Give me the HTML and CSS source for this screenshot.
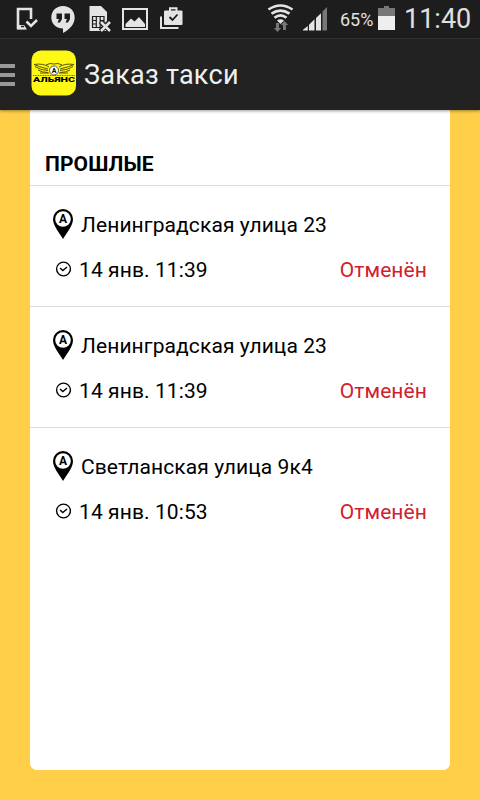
FILE: index.html
```
<!DOCTYPE html>
<html lang="ru">
<head>
    <meta charset="UTF-8">
    <meta name="viewport" content="width=device-width, initial-scale=1.0">
    <title>Заказ такси</title>
    <link rel="stylesheet" href="styles.css">
</head>
<body>

    <div class="status-bar">
        <div class="notifications">
            <svg width="24" height="38" viewBox="15 0 24 38">
                <path d="M31 19V9H18V28H25" fill="none" stroke="#e4e4e4" stroke-width="2.600"/>
                <path d="M17 25H24L27 29.500H17Z" fill="#e4e4e4"/>
                <path d="M21 26.500H24" stroke="#1d1d1d" stroke-width="1.500"/>
                <path d="M26.500 21.500L31 26L37 20" fill="none" stroke="#e4e4e4" stroke-width="2.500"/>
            </svg>
            <svg width="26" height="38" viewBox="50 0 26 38">
                <path d="M63 6C56 6 51.300 11 51.300 17.500C51.300 24 56.500 28.500 63 28.500V33C69 30 74.700 24.500 74.700 17.500C74.700 11 70 6 63 6Z" fill="#e4e4e4"/>
                <path d="M56.500 13.500H62V19L60 22.500H57.500L59 19H56.500ZM64.500 13.500H70V19L68 22.500H65.500L67 19H64.500Z" fill="#1d1d1d"/>
            </svg>
            <svg width="24" height="38" viewBox="88 0 24 38">
                <path d="M89.500 6H101L107 12V31H89.500Z" fill="#e4e4e4"/>
                <path d="M92.500 16.500H104V27.500H92.500ZM96.300 16.500V27.500M100.200 16.500V27.500M92.500 20.500H96M92.500 24H96M100 20.500H104M100 24H104" fill="none" stroke="#1d1d1d" stroke-width="1.200"/>
                <path d="M100.500 21.500L110 31M110 21.500L100.500 31" stroke="#1d1d1d" stroke-width="5"/>
                <path d="M101 22L110 31M110 22L101 31" stroke="#e4e4e4" stroke-width="2.500"/>
            </svg>
            <svg width="28" height="38" viewBox="121 0 28 38">
                <rect x="123" y="9" width="24" height="20" fill="none" stroke="#e4e4e4" stroke-width="2"/>
                <path d="M125.500 27V24L131 18.500L134.500 21.500L139 17L145 24V27Z" fill="#e4e4e4"/>
            </svg>
            <svg width="26" height="38" viewBox="158 0 26 38">
                <path d="M161 16.500V28H178.500" fill="none" stroke="#e4e4e4" stroke-width="2"/>
                <path d="M170 11V8.200H176.500V11" fill="none" stroke="#e4e4e4" stroke-width="2"/>
                <rect x="164" y="10.500" width="18.500" height="14.500" rx="1" fill="#e4e4e4"/>
                <path d="M169.500 17L172.500 20L177.500 14.500" fill="none" stroke="#1d1d1d" stroke-width="1.800"/>
            </svg>
        </div>
        <div class="indicators">
            <svg width="28" height="38" viewBox="266 0 28 38">
                <g fill="none" stroke="#e4e4e4" stroke-width="2.700">
                    <path d="M268.500 9.500Q280.500 1.500 292.500 9.500"/>
                    <path d="M271.500 13.700Q280.500 7.500 289.500 13.700"/>
                    <path d="M274.500 17.800Q280.500 13 286.500 17.800"/>
                </g>
                <path d="M277 20.500Q280.500 18 284 20.500L280.500 24Z" fill="#e4e4e4"/>
                <path d="M276 23H279V28H281.200L277.500 32L273.800 28H276ZM283 30H286V25H288.200L284.500 21L280.800 25H283Z" fill="#777"/>
            </svg>
            <svg class="signal" width="26" height="38" viewBox="302 0 26 38">
                <path d="M303 30.500V29.800L307.800 25.900V30.500ZM309 30.500V24.700L314.500 19.300V30.500ZM316 30.500V18L321 13.200V30.500Z" fill="#e4e4e4"/>
                <path d="M322.500 11.500L327 7V30.500H322.500Z" fill="#777"/>
            </svg>
            <span class="percent">65%</span>
            <svg width="18" height="38" viewBox="378 0 18 38">
                <path d="M378 8H384V6H389V8H395V16H378Z" fill="#777"/>
                <rect x="378" y="16" width="17" height="14" fill="#eee"/>
            </svg>
            <span class="time">11:40</span>
        </div>
    </div>

    <div class="action-bar">
        <div class="menu">
            <span></span>
            <span></span>
            <span></span>
        </div>
        <svg class="logo" width="46" height="46" viewBox="0 0 46 46">
            <rect x="0.500" y="0.500" width="44.500" height="45" rx="9.500" fill="#fff714"/>
            <g fill="none" stroke="#5c5900" stroke-width="1">
                <path d="M18 17Q12 13 3 14.500Q7 16.500 17 19M4 16.500Q9 20 17 20.500M7 20Q11 22.500 17 22.500M9 23H18"/>
                <path d="M28 17Q34 13 43 14.500Q39 16.500 29 19M42 16.500Q37 20 29 20.500M39 20Q35 22.500 29 22.500M28 23H37"/>
                <path d="M15 15Q19 12.500 23 14Q27 12.500 31 15"/>
                <path d="M2 25.500H44" stroke-dasharray="1 0.700" stroke-width="0.900"/>
            </g>
            <circle cx="23" cy="20.500" r="4.500" fill="#fff" stroke="#333" stroke-width="0.800"/>
            <text class="logo-letter" x="23" y="23.300">А</text>
            <text class="logo-name" x="2" y="32.300" textLength="42" lengthAdjust="spacingAndGlyphs">АЛЬЯНС</text>
        </svg>
        <h1>Заказ такси</h1>
    </div>

    <div class="card">
        <h2>ПРОШЛЫЕ</h2>

        <div class="order">
            <div class="address">
                <svg class="pin" width="20" height="30" viewBox="0 0 20 30">
                    <path d="M10 0A10 10 0 0 0 0 10C0 17 6 23 10 30C14 23 20 17 20 10A10 10 0 0 0 10 0Z"/>
                    <circle cx="10" cy="10" r="7.800" fill="#fff"/>
                    <text x="10" y="14">A</text>
                </svg>
                <span>Ленинградская улица 23</span>
            </div>
            <div class="details">
                <svg class="clock" width="16" height="16" viewBox="0 0 16 16">
                    <circle cx="8.500" cy="8" r="6.900"/>
                    <path d="M5 7L7.800 9.500L12 6"/>
                </svg>
                <span class="date">14 янв. 11:39</span>
                <span class="state">Отменён</span>
            </div>
        </div>

        <div class="order">
            <div class="address">
                <svg class="pin" width="20" height="30" viewBox="0 0 20 30">
                    <path d="M10 0A10 10 0 0 0 0 10C0 17 6 23 10 30C14 23 20 17 20 10A10 10 0 0 0 10 0Z"/>
                    <circle cx="10" cy="10" r="7.800" fill="#fff"/>
                    <text x="10" y="14">A</text>
                </svg>
                <span>Ленинградская улица 23</span>
            </div>
            <div class="details">
                <svg class="clock" width="16" height="16" viewBox="0 0 16 16">
                    <circle cx="8.500" cy="8" r="6.900"/>
                    <path d="M5 7L7.800 9.500L12 6"/>
                </svg>
                <span class="date">14 янв. 11:39</span>
                <span class="state">Отменён</span>
            </div>
        </div>

        <div class="order">
            <div class="address">
                <svg class="pin" width="20" height="30" viewBox="0 0 20 30">
                    <path d="M10 0A10 10 0 0 0 0 10C0 17 6 23 10 30C14 23 20 17 20 10A10 10 0 0 0 10 0Z"/>
                    <circle cx="10" cy="10" r="7.800" fill="#fff"/>
                    <text x="10" y="14">A</text>
                </svg>
                <span>Светланская улица 9к4</span>
            </div>
            <div class="details">
                <svg class="clock" width="16" height="16" viewBox="0 0 16 16">
                    <circle cx="8.500" cy="8" r="6.900"/>
                    <path d="M5 7L7.800 9.500L12 6"/>
                </svg>
                <span class="date">14 янв. 10:53</span>
                <span class="state">Отменён</span>
            </div>
        </div>
    </div>

</body>
</html>
```

FILE: styles.css
```
* {
    box-sizing: border-box;
}
body {
    font-family: Roboto, "Noto Sans", sans-serif;
    margin: 0;
    height: 800px;
    background-color: #ffcf49;
    color: #000;
    display: flex;
    flex-direction: column;
    overflow: hidden;
    white-space: nowrap;
}
svg {
    display: block;
    flex-shrink: 0;
}
.status-bar {
    height: 38px;
    background-color: #1d1d1d;
    color: #e0e0e0;
    display: flex;
    justify-content: space-between;
    padding: 0 9px 0 15px;
    flex-shrink: 0;
}
.notifications {
    display: flex;
    gap: 9px;
}
.notifications svg:nth-child(2) {
    margin: 0 3px 0 2px;
}
.indicators {
    display: flex;
    align-items: center;
}
.signal {
    margin: 0 12px 0 8px;
}
.percent {
    font-size: 18px;
    width: 38px;
    padding-top: 1px;
}
.time {
    font-size: 27px;
    margin-left: 8px;
    width: 67px;
}
.action-bar {
    height: 72px;
    background-color: #222;
    border-top: 1px solid #303030;
    box-shadow: 0 1px 3px rgba(0, 0, 0, 0.4);
    display: flex;
    align-items: center;
    flex-shrink: 0;
    z-index: 1;
}
.menu {
    width: 15px;
    height: 22px;
    display: flex;
    flex-direction: column;
    justify-content: space-between;
}
.menu span {
    height: 4px;
    background-color: #999;
}
.logo {
    margin: 0 7px 3px 16px;
}
.logo-letter {
    font-size: 7px;
    font-weight: bold;
    text-anchor: middle;
}
.logo-name {
    font-size: 8px;
    font-weight: 900;
}
.action-bar h1 {
    margin: 0;
    color: #f0f0f0;
    font-size: 27px;
    font-weight: normal;
    letter-spacing: 0.25px;
}
.card {
    width: 420px;
    height: 660px;
    margin: 0 30px;
    background-color: #fff;
    border-radius: 0 0 7px 7px;
    flex-shrink: 0;
}
.card h2 {
    margin: 0;
    height: 76px;
    padding: 41px 15px 0;
    border-bottom: 1px solid #ddd;
    font-size: 21px;
    line-height: 26px;
    font-weight: bold;
    letter-spacing: 0.1px;
}
.order {
    height: 121px;
    padding: 21px 23px 0;
    font-size: 21px;
    letter-spacing: 0.09px;
    border-bottom: 1px solid #ddd;
}
.order:last-child {
    border-bottom: none;
}
.address {
    display: flex;
    align-items: center;
    height: 34px;
    gap: 8px;
}
.address span {
    padding-top: 2px;
}
.pin text {
    font-size: 12px;
    font-weight: bold;
    text-anchor: middle;
}
.details {
    display: flex;
    align-items: center;
    height: 34px;
    margin-top: 12px;
    padding-left: 2px;
}
.clock {
    fill: none;
    stroke: #000;
    stroke-width: 1.4;
    margin-bottom: 3px;
}
.date {
    margin-left: 8px;
}
.state {
    margin-left: auto;
    color: #d0212c;
}
```
